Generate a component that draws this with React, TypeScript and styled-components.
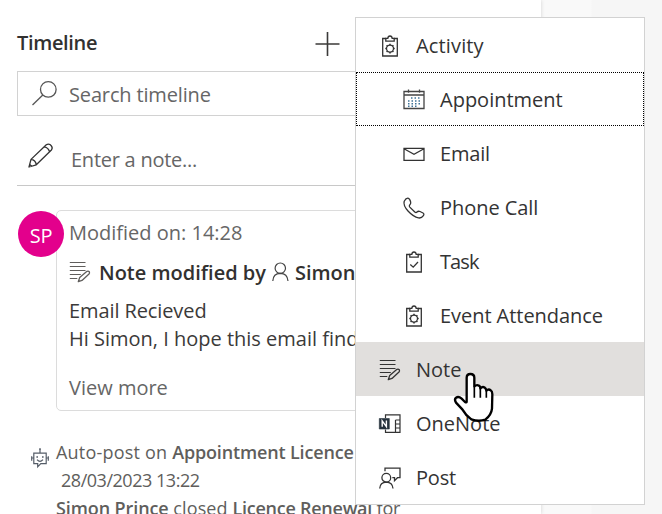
import React from 'react';
import styled, { createGlobalStyle } from 'styled-components';

const GlobalStyle = createGlobalStyle`
  * { box-sizing: border-box; }
  body { margin: 0; background: #f7f7f7; font-family: 'Open Sans', 'Noto Sans', sans-serif; }
  svg { display: block; flex: none; overflow: visible; }
`;

const Page = styled.div`
  position: relative;
  width: 662px;
  height: 514px;
  overflow: hidden;
  background: linear-gradient(90deg, #f9f9f9 591px, #f6f6f6 592px);
`;

const Panel = styled.main`
  width: 541px;
  height: 514px;
  padding-left: 17px;
  background: #fff;
  box-shadow: 0 0 4px rgba(0, 0, 0, 0.16);
`;

const Text = styled.span<{ $spacing?: number; $strong?: boolean }>`
  white-space: pre;
  letter-spacing: ${p => p.$spacing ?? 0}px;
  font-weight: ${p => (p.$strong ? 600 : 400)};
`;

const Header = styled.header`
  display: flex;
  align-items: flex-start;
  height: 71px;
  padding-top: 29px;
  font-size: 20px;
  line-height: 28px;
  color: #323130;
`;

const Title = styled.h1`
  width: 298px;
  margin: 0;
  font-size: 20px;
  font-weight: 600;
  letter-spacing: -0.35px;
`;

const AddButton = styled.button`
  margin: 3px 0 0;
  padding: 0;
  border: 0;
  background: none;
`;

const SearchBox = styled.div`
  display: flex;
  height: 45px;
  padding: 8px 0 0 14px;
  border: 1px solid #d2d2d2;
  font-size: 20px;
  line-height: 30px;
  color: #666;
`;

const SearchText = styled(Text)`
  margin-left: 12px;
`;

const NoteInput = styled.div`
  display: flex;
  height: 70px;
  padding: 27px 0 0 11px;
  border-bottom: 1px solid #c8c8c8;
  font-size: 20px;
  line-height: 34px;
  color: #666;
`;

const NoteText = styled(Text)`
  margin-left: 17px;
`;

const Record = styled.section`
  position: relative;
  margin: 24px 20px 0 39px;
`;

const Avatar = styled.div`
  position: absolute;
  left: -38px;
  top: 1px;
  display: flex;
  align-items: center;
  justify-content: center;
  width: 46px;
  height: 46px;
  padding-top: 2px;
  border-radius: 50%;
  background: #e3008c;
  color: #fff;
  font-size: 20px;
`;

const Card = styled.article`
  height: 201px;
  padding: 8px 0 0 12px;
  border: 1px solid #dcdcdc;
  border-radius: 5px;
  font-size: 20px;
  line-height: 28px;
  color: #323130;
`;

const CardLine = styled.div<{ $muted?: boolean; $top?: number }>`
  display: flex;
  height: 28px;
  margin-top: ${p => p.$top ?? 0}px;
  color: ${p => (p.$muted ? '#666' : '#3b3a39')};
`;

const CardHeading = styled(CardLine)`
  align-items: center;
  color: #323130;
`;

const CardIcon = styled.span<{ $before?: number; $after: number }>`
  margin: 0 ${p => p.$after}px 3px ${p => p.$before ?? 0}px;
`;

const AutoPost = styled.section`
  display: flex;
  margin: 27px 0 0 14px;
  font-size: 18px;
  line-height: 28px;
  color: #605e5c;
`;

const AutoPostIcon = styled.div`
  width: 25px;
  padding-top: 10px;
`;

const PostLine = styled.div<{ $indent?: number }>`
  height: 28px;
  padding-left: ${p => p.$indent ?? 0}px;
  white-space: pre;
`;

const Menu = styled.nav`
  position: absolute;
  left: 355px;
  top: 17px;
  width: 290px;
  height: 488px;
  border: 1px solid #d2d2d2;
  background: #fff;
`;

const MenuItem = styled.div<{ $child?: boolean; $focus?: boolean; $hover?: boolean }>`
  display: flex;
  align-items: center;
  gap: 15px;
  height: 54px;
  padding-left: ${p => (p.$child ? 46 : 22)}px;
  border: 1px ${p => (p.$focus ? 'dotted #000' : 'solid transparent')};
  background: ${p => (p.$hover ? '#e1dfdd' : 'transparent')};
  color: #333;
  font-size: 20px;
  line-height: 28px;
`;

const MenuIcon = styled.span`
  padding-top: 1px;
`;

const MenuLabel = styled(Text)`
  padding-top: 2px;
`;

const Cursor = styled.div`
  position: absolute;
  left: 454px;
  top: 372px;
`;

const PlusIcon = () => (
  <svg width="25" height="25" viewBox="0 0 25 25" fill="none" stroke="#3b3a39" strokeWidth="1.6">
    <path d="M12.5 0v24M.5 12h24" />
  </svg>
);

const SearchIcon = () => (
  <svg width="25" height="26" viewBox="0 0 25 26" fill="none" stroke="#555" strokeWidth="1.3">
    <circle cx="16.3" cy="9.4" r="7.8" />
    <path d="M10.8 15 .5 25" />
  </svg>
);

const PencilIcon = () => (
  <svg width="26" height="25" viewBox="0 0 26 25" fill="none" stroke="#333" strokeWidth="1.3" strokeLinejoin="round">
    <path d="M1 24 3 16.4 18.3 1.8Q20.3.3 22.4 1.8L23.4 3Q25 5 23.4 7L8.3 21.8ZM3 16.4Q7.6 17 8.3 21.8M16.3 3.8Q20.7 4.7 21.5 9M1.5 21.2 3.7 23.3" />
  </svg>
);

const NoteIcon = ({ color }: { color: string }) => (
  <svg width="22" height="22" viewBox="0 0 22 22" fill="none" stroke={color} strokeWidth="1.2">
    <path d="M.8 1.5h15.7M.8 5.5h15.7M.8 9.5h15.7M.8 13.5h11M.8 17.5h7.5" />
    <path d="M9.3 20.7 10.7 16.5 18 10.3Q19.4 9.7 20.3 10.7 20.9 12 20 13L13 19.4Z" strokeWidth="1.3" strokeLinejoin="round" />
  </svg>
);

const PersonIcon = () => (
  <svg width="17" height="20" viewBox="0 0 17 20" fill="none" stroke="#444" strokeWidth="1.2">
    <circle cx="8.3" cy="6.2" r="5.2" />
    <path d="M.8 19Q1.2 11.5 8.3 11.4 15.4 11.5 16 19" />
  </svg>
);

const BotIcon = () => (
  <svg width="18" height="20" viewBox="0 0 18 20" fill="none" stroke="#555d68" strokeWidth="1.2">
    <path d="M2.8 5.2H15.2V15.7H9.8L6.7 18.8V15.7H2.8ZM9 1.8V5M.7 8.3V12.7M17.3 8.3V12.7M.7 10H2.8M15.2 10h2.1M6 11.7Q9 15 12 11.7" />
    <path d="M6.2 8.2v1.5M11.8 8.2v1.5M9 .3v1.8" strokeWidth="1.6" />
  </svg>
);

const ClipboardShell = () => (
  <>
    <path d="M7.2 3.5H3.7V21H18.3V3.5H14.8" />
    <path d="M6.8 6.2V3.4H8.8Q9 1 11 1 13 1 13.2 3.4H15.2V6.2Z" />
  </>
);

const ClipboardGearIcon = () => (
  <svg width="22" height="22" viewBox="0 0 22 22" fill="none" stroke="#333" strokeWidth="1.3">
    <ClipboardShell />
    <circle cx="11" cy="13.6" r="3.5" />
    <path d="M11 8.7v1.5M11 17v1.5M6.3 13.6h1.3M14.4 13.6h1.3M7.6 10.2l1 1M13.4 16l1 1M14.4 10.2l-1 1M8.6 16l-1 1" strokeWidth="1.5" />
  </svg>
);

const TaskIcon = () => (
  <svg width="22" height="22" viewBox="0 0 22 22" fill="none" stroke="#333" strokeWidth="1.3">
    <ClipboardShell />
    <path d="M7.3 13.5 10.2 16.2 15 11" />
  </svg>
);

const CalendarIcon = () => (
  <svg width="22" height="22" viewBox="0 0 22 22" fill="none" stroke="#444" strokeWidth="1.3">
    <path d="M1 2.5H21V19.5H1ZM1 6H21M5.5.5V3.8M16.5.5V3.8" />
    <path d="M8 9h10M5 12h13M5 14.7h13M5 17.2h9" stroke="#3f7398" strokeDasharray="1.5 2" strokeWidth="1.5" />
  </svg>
);

const MailIcon = () => (
  <svg width="22" height="22" viewBox="0 0 22 22" fill="none" stroke="#333" strokeWidth="1.3">
    <path d="M1 5.3H21V17.3H1ZM1 5.8 11 11.2 21 5.8" />
  </svg>
);

const PhoneIcon = () => (
  <svg width="22" height="22" viewBox="0 0 22 22" fill="none" stroke="#333" strokeWidth="1.3" strokeLinejoin="round">
    <path d="M1.2 4.2Q3 1 5 1.2 6.7 1.4 7.7 5.2 8 6.8 6.7 8 5.8 9 6.8 10.1L11.8 15Q13 16 14 15 15.2 13.8 17 14.5L20 16Q21.5 17 20.4 18.6 18.5 21.4 15.5 20.9 10.5 20 5 14 0 8.3 1.2 4.2Z" />
  </svg>
);

const OneNoteIcon = () => (
  <svg width="22" height="22" viewBox="0 0 22 22" fill="none" stroke="#333" strokeWidth="1.2">
    <path d="M6.5 5V1.8H21V19.3H6.5V16.5M16.5 7V19.3M16.5 7H21M16.5 11H21M16.5 15H21" />
    <path d="M.3 5.5H10.3V16H.3Z" fill="#26323d" stroke="#26323d" strokeWidth=".6" />
    <path d="M3.2 13.8V7.8L7.4 13.6V7.5" stroke="#fff" strokeWidth="1.4" />
  </svg>
);

const PostIcon = () => (
  <svg width="22" height="22" viewBox="0 0 22 22" fill="none" stroke="#333" strokeWidth="1.3">
    <circle cx="7.3" cy="10.7" r="4.4" />
    <path d="M.7 21.5Q1.1 15.2 7.3 15.1 13.5 15.2 14 21.5M6 4.2V1.2H21V10.7H18.5L15.5 13.6V10.7H13.3" />
  </svg>
);

const HandIcon = () => (
  <svg width="41" height="50" viewBox="312 126 123 150" fill="#fff" stroke="#000" strokeWidth="7" strokeLinejoin="round">
    <path d="M350 215V143Q350 132 361 132 373 132 373 143V169Q380 163 387 167 391 169 391 175 398 168 404 173 408 175 409 182 416 175 422 181 427 184 427 193L426 236Q424 255 406 269 386 276 364 268 347 256 337 238L318 218Q312 208 318 203 326 198 335 206L345 216Q350 219 350 215Z" />
    <path d="M373 169V203M391 175V203M409 182V203" strokeWidth="5" />
  </svg>
);

type Item = {
  label: string;
  icon: React.ReactNode;
  spacing?: number;
  child?: boolean;
  focus?: boolean;
  hover?: boolean;
};

const items: Item[] = [
  { label: 'Activity', icon: <ClipboardGearIcon />, spacing: 0.15 },
  { label: 'Appointment', icon: <CalendarIcon />, child: true, focus: true },
  { label: 'Email', icon: <MailIcon />, spacing: -0.2, child: true },
  { label: 'Phone Call', icon: <PhoneIcon />, spacing: -0.05, child: true },
  { label: 'Task', icon: <TaskIcon />, spacing: -0.9, child: true },
  { label: 'Event Attendance', icon: <ClipboardGearIcon />, spacing: -0.05, child: true },
  { label: 'Note', icon: <NoteIcon color="#333" />, hover: true },
  { label: 'OneNote', icon: <OneNoteIcon /> },
  { label: 'Post', icon: <PostIcon />, spacing: -0.2 },
];

export default function App() {
  return (
    <>
      <GlobalStyle />
      <Page>
        <Panel>
          <Header>
            <Title>Timeline</Title>
            <AddButton aria-label="Add"><PlusIcon /></AddButton>
          </Header>
          <SearchBox>
            <SearchIcon />
            <SearchText $spacing={-0.15}>Search timeline</SearchText>
          </SearchBox>
          <NoteInput>
            <PencilIcon />
            <NoteText $spacing={-0.25}>Enter a note...</NoteText>
          </NoteInput>
          <Record>
            <Card>
              <CardLine $muted><Text>Modified on: 14:28</Text></CardLine>
              <CardHeading $top={12}>
                <CardIcon $after={8}><NoteIcon color="#605e5c" /></CardIcon>
                <Text $strong>Note modified by</Text>
                <CardIcon $before={6} $after={6}><PersonIcon /></CardIcon>
                <Text $strong>Simon Prince</Text>
              </CardHeading>
              <CardLine $top={10}><Text $spacing={-0.1}>Email Recieved</Text></CardLine>
              <CardLine><Text>Hi Simon, I hope this email finds you</Text></CardLine>
              <CardLine $top={21} $muted><Text>View more</Text></CardLine>
            </Card>
            <Avatar><Text $spacing={-0.3}>SP</Text></Avatar>
          </Record>
          <AutoPost>
            <AutoPostIcon><BotIcon /></AutoPostIcon>
            <div>
              <PostLine>
                <Text $spacing={0.2}>Auto-post on </Text>
                <Text $strong $spacing={-0.15}>Appointment Licence</Text>
              </PostLine>
              <PostLine $indent={5}><Text $spacing={-0.47}>28/03/2023 13:22</Text></PostLine>
              <PostLine>
                <Text $strong $spacing={-0.1}>Simon Prince</Text>
                <Text $spacing={0.1}> closed </Text>
                <Text $strong $spacing={-0.25}>Licence Renewal</Text>
                <Text $spacing={-0.2}> for</Text>
              </PostLine>
            </div>
          </AutoPost>
        </Panel>
        <Menu>
          {items.map(item => (
            <MenuItem key={item.label} $child={item.child} $focus={item.focus} $hover={item.hover}>
              <MenuIcon>{item.icon}</MenuIcon>
              <MenuLabel $spacing={item.spacing}>{item.label}</MenuLabel>
            </MenuItem>
          ))}
        </Menu>
        <Cursor><HandIcon /></Cursor>
      </Page>
    </>
  );
}
